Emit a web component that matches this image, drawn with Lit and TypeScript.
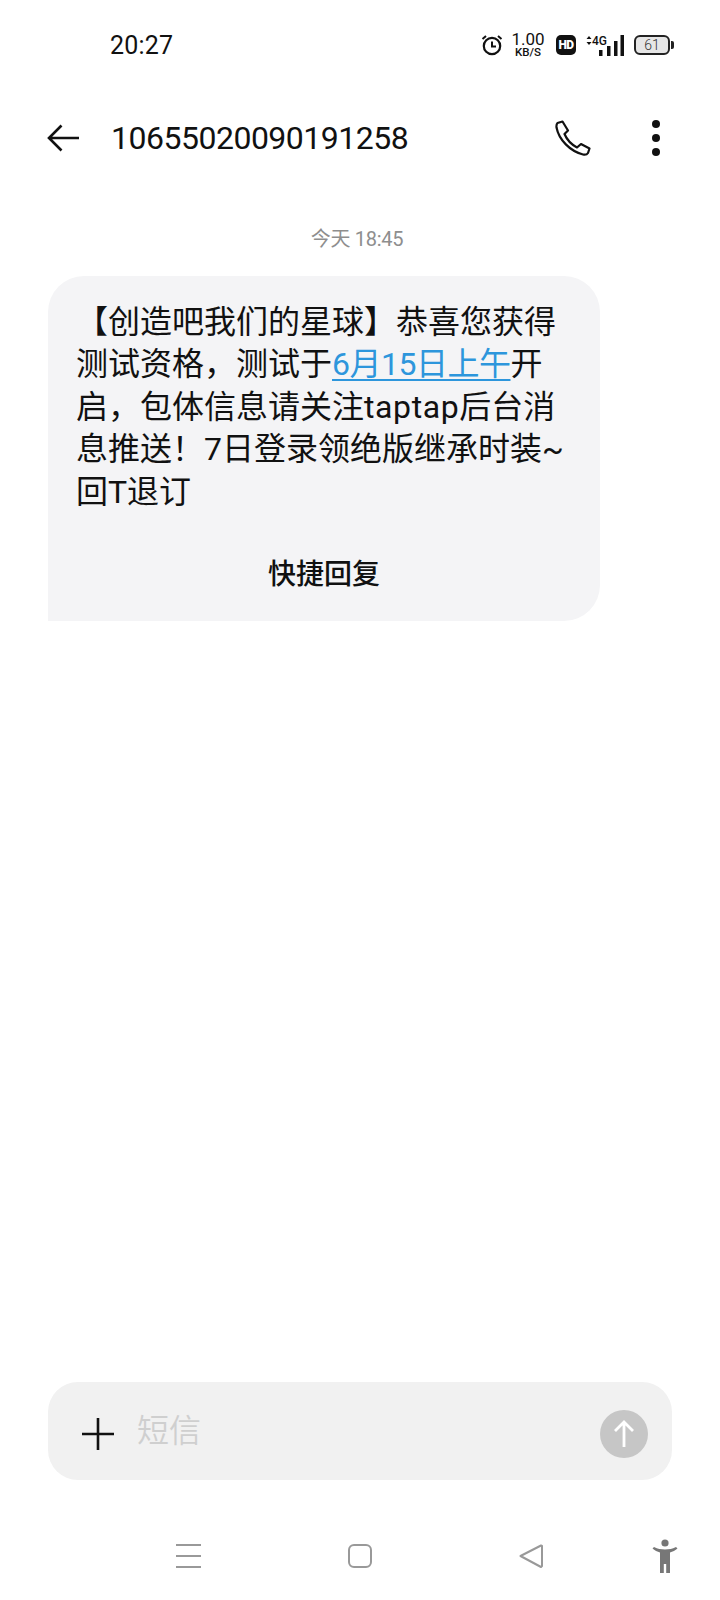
import { html, css, LitElement } from 'lit'
import { customElement } from 'lit/decorators.js'

/**
 * SMS conversation screen
 */
@customElement('app-root')
export class AppRoot extends LitElement {
  static styles = css`
    :host {
      display: flex;
      flex-direction: column;
      width: 720px;
      height: 1600px;
      background: #fff;
      color: #111;
      font-family: Roboto, "Noto Sans CJK SC", sans-serif;
      overflow: hidden;
    }
    svg { display: block; flex: none; }

    .status {
      display: flex;
      align-items: center;
      height: 90px;
      padding-left: 110px;
      flex: none;
    }
    .clock { font-size: 25px; letter-spacing: 0.2px; width: 371px; }
    .speed {
      display: flex;
      flex-direction: column;
      align-items: center;
      width: 36px;
      margin: 0 10px 0 7px;
    }
    .speed b { font-size: 17px; font-weight: 400; line-height: 15px; }
    .speed span { font-size: 11.5px; font-weight: 500; line-height: 11px; }
    .hd {
      width: 20px;
      height: 20px;
      border-radius: 5px;
      background: #111;
      color: #fff;
      font-size: 12px;
      font-weight: 900;
      line-height: 20px;
      text-align: center;
      letter-spacing: -0.5px;
    }
    .net { position: relative; width: 38px; height: 24px; margin: 0 10px; }
    .net .g {
      position: absolute;
      left: 6px;
      top: 2px;
      font-size: 12px;
      font-weight: 500;
      line-height: 1;
    }
    .battery {
      display: flex;
      align-items: center;
      width: 40px;
    }
    .battery .cell {
      width: 36px;
      height: 20px;
      box-sizing: border-box;
      border: 2px solid #222;
      border-radius: 6px;
      background: #e6e6e6;
      color: #333;
      font-size: 14px;
      font-weight: 300;
      line-height: 16px;
      text-align: center;
    }
    .battery .tip { width: 3px; height: 8px; background: #222; border-radius: 0 2px 2px 0; margin-left: 1px; }

    .header {
      display: flex;
      align-items: center;
      height: 96px;
      flex: none;
    }
    .back { margin-left: 47px; }
    .title {
      margin-left: 32px;
      width: 444px;
      font-size: 32px;
      letter-spacing: -0.5px;
      line-height: 98px;
      white-space: nowrap;
    }
    .dots { margin-left: 60px; }

    .main { flex: 1; min-height: 0; }
    .date {
      margin-top: 38px;
      padding-right: 6px;
      height: 30px;
      line-height: 30px;
      text-align: center;
      font-size: 20px;
      letter-spacing: -0.3px;
      color: #8e8e8e;
    }
    .bubble {
      margin: 22px 0 0 48px;
      width: 552px;
      height: 345px;
      box-sizing: border-box;
      padding: 25px 28px 0;
      background: #f4f4f6;
      border-radius: 36px 36px 36px 0;
      font-size: 32px;
      line-height: 42.4px;
    }
    .bubble a { color: #2d96dc; letter-spacing: -0.5px; text-decoration: underline; text-underline-offset: 4px; text-decoration-thickness: 2px; }
    .latin { letter-spacing: 0.6px; }
    .reply {
      margin-top: 41px;
      text-align: center;
      font-size: 28px;
      font-weight: 500;
      line-height: 42px;
    }

    .composer {
      display: flex;
      align-items: center;
      box-sizing: border-box;
      margin: 0 48px;
      height: 98px;
      padding-top: 5px;
      flex: none;
      background: #f1f1f1;
      border-radius: 30px;
    }
    .plus { margin-left: 34px; }
    .hint { margin-left: 23px; padding-bottom: 11px; flex: 1; font-size: 32px; color: #cfcfcf; font-weight: 350; }
    .send { margin-right: 24px; }

    .nav {
      display: flex;
      align-items: center;
      box-sizing: border-box;
      height: 120px;
      padding-top: 32px;
      flex: none;
    }
    .nav svg:nth-child(1) { margin-left: 176px; }
    .nav svg:nth-child(2) { margin-left: 147px; }
    .nav svg:nth-child(3) { margin-left: 147px; }
    .nav svg:nth-child(4) { margin-left: 109px; }
  `

  private statusBar() {
    return html`
      <div class="status">
        <div class="clock">20:27</div>
        <svg width="22" height="22" viewBox="0 0 22 22" fill="none" stroke="#111" stroke-width="2.2">
          <circle cx="11" cy="12" r="8.2"></circle>
          <path d="M11 7.5V12.5H15" stroke-width="2"></path>
          <path d="M1.5 5 5 2M20.5 5 17 2" stroke-width="2"></path>
        </svg>
        <div class="speed"><b>1.00</b><span>KB/S</span></div>
        <div class="hd">HD</div>
        <div class="net">
          <svg width="38" height="24" viewBox="0 0 38 24" fill="#111" style="position:absolute;left:0;top:0">
            <path d="M3 3 5.5 6H0.5ZM3 12 0.5 9H5.5Z"></path>
            <rect x="13" y="17" width="3.5" height="6"></rect>
            <rect x="21" y="13" width="3.5" height="10"></rect>
            <rect x="28" y="8" width="3.5" height="15"></rect>
            <rect x="34.5" y="2" width="3.5" height="21"></rect>
          </svg>
          <span class="g">4G</span>
        </div>
        <div class="battery"><div class="cell">61</div><div class="tip"></div></div>
      </div>
    `
  }

  private headerBar() {
    return html`
      <div class="header">
        <svg class="back" width="32" height="28" viewBox="0 0 32 28" fill="none" stroke="#111" stroke-width="2.6">
          <path d="M32 14H2M14.5 1.5 2 14 14.5 26.5"></path>
        </svg>
        <div class="title">10655020090191258</div>
        <svg width="36" height="36" viewBox="0 0 36 36" fill="none" stroke="#111" stroke-width="2.2" stroke-linejoin="round">
          <path d="M2.5 3 7.5 1.5 13 10.5 9.5 14C12 20 16.5 24.5 22 27.5L26 24 34.5 28.5 33 33C32 34.5 30 35 28 34.5 15 31 4 20 1.5 7.5 1.3 5.5 1.5 4 2.5 3Z"></path>
        </svg>
        <svg class="dots" width="10" height="38" viewBox="0 0 10 38" fill="#111">
          <circle cx="5" cy="5" r="4"></circle>
          <circle cx="5" cy="19" r="4"></circle>
          <circle cx="5" cy="33" r="4"></circle>
        </svg>
      </div>
    `
  }

  private bottomBar() {
    return html`
      <div class="composer">
        <svg class="plus" width="32" height="32" viewBox="0 0 32 32" stroke="#111" stroke-width="2.6">
          <path d="M0 16H32M16 0V32"></path>
        </svg>
        <div class="hint">短信</div>
        <svg class="send" width="48" height="48" viewBox="0 0 48 48" fill="none">
          <circle cx="24" cy="24" r="24" fill="#c6c6c6"></circle>
          <path d="M24 37V12M15 21 24 12 33 21" stroke="#fff" stroke-width="2.8"></path>
        </svg>
      </div>
      <div class="nav">
        <svg width="25" height="24" viewBox="0 0 25 24" fill="#999">
          <rect y="0" width="25" height="2"></rect>
          <rect y="11" width="25" height="2"></rect>
          <rect y="22" width="25" height="2"></rect>
        </svg>
        <svg width="24" height="24" viewBox="0 0 24 24" fill="none" stroke="#999" stroke-width="2">
          <rect x="1" y="1" width="22" height="22" rx="5"></rect>
        </svg>
        <svg width="24" height="24" viewBox="0 0 24 24" fill="none" stroke="#999" stroke-width="2" stroke-linejoin="round">
          <path d="M1.5 12 22 1.5 23 2V22L22 23Z"></path>
        </svg>
        <svg width="26" height="34" viewBox="0 0 26 34" fill="#777">
          <circle cx="13" cy="4" r="3.6"></circle>
          <path d="M0.5 9.5 2 8C6 9.8 8.5 10.5 13 10.5S20 9.8 24 8L25.5 9.5C23.5 11.5 20.5 12.8 18 13.4V34H14.2V25H11.8V34H8V13.4C5.5 12.8 2.5 11.5 0.5 9.5Z"></path>
        </svg>
      </div>
    `
  }

  render() {
    return html`
      ${this.statusBar()}
      ${this.headerBar()}
      <div class="main">
        <div class="date">今天 18:45</div>
        <div class="bubble">
          【创造吧我们的星球】恭喜您获得<br>测试资格，测试于<a>6月15日上午</a>开<br>启，包体信息请关注<span class="latin">taptap</span>后台消<br>息推送！7日登录领绝版继承时装~<br>回T退订
          <div class="reply">快捷回复</div>
        </div>
      </div>
      ${this.bottomBar()}
    `
  }
}
